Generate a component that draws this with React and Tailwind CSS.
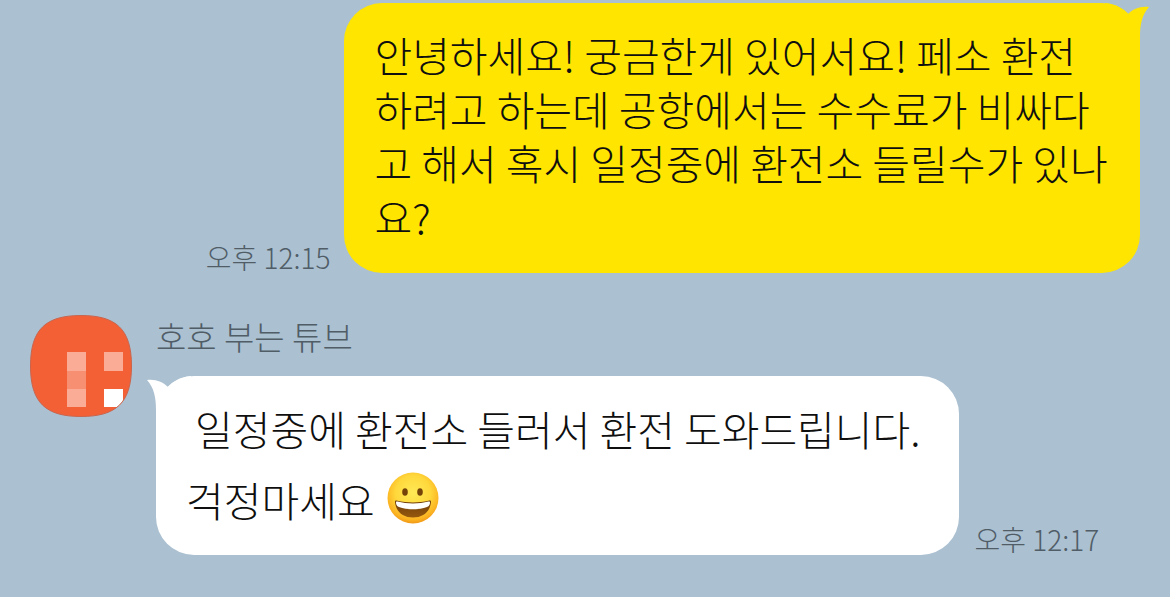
const ME = {
  text: '안녕하세요! 궁금한게 있어서요! 페소 환전하려고 하는데 공항에서는 수수료가 비싸다고 해서 혹시 일정중에 환전소 들릴수가 있나요?',
  time: '오후 12:15',
};

const GUIDE = {
  name: '호호 부는 튜브',
  lines: [' 일정중에 환전소 들러서 환전 도와드립니다.', '걱정마세요 '],
  time: '오후 12:17',
};

const AVATAR_SHAPE = 'M51 .5C86 .5 101.5 14 101.5 51S86 101.5 51 101.5.5 88 .5 51 16 .5 51 .5Z';

function Avatar() {
  return (
    <svg viewBox="0 0 102 102" className="w-[102px] h-[102px] shrink-0" role="img" aria-label={GUIDE.name}>
      <clipPath id="avatar-shape">
        <path d={AVATAR_SHAPE} />
      </clipPath>
      <g clipPath="url(#avatar-shape)">
        <rect width="102" height="102" fill="#f46036" />
        <rect x="37" y="37" width="19" height="19" fill="#faac96" />
        <rect x="37" y="56" width="19" height="18" fill="#f78f73" />
        <rect x="37" y="74" width="19" height="18" fill="#faac96" />
        <rect x="74" y="37" width="19" height="19" fill="#faac96" />
        <rect x="74" y="74" width="19" height="18" fill="#fff" />
      </g>
      <path d={AVATAR_SHAPE} fill="none" stroke="#c9644c" />
    </svg>
  );
}

function Grin() {
  return (
    <svg viewBox="0 0 52 52" className="w-[52px] h-[52px] ml-[3px] mb-1" role="img" aria-label="😀">
      <defs>
        <radialGradient id="grin-face" cx=".5" cy=".4" r=".62">
          <stop offset="0" stopColor="#ffe956" />
          <stop offset=".55" stopColor="#ffd83c" />
          <stop offset=".85" stopColor="#fbb321" />
          <stop offset="1" stopColor="#ee9115" />
        </radialGradient>
        <linearGradient id="grin-mouth" x1="0" y1="0" x2="0" y2="1">
          <stop offset="0" stopColor="#6d3b08" />
          <stop offset="1" stopColor="#96590f" />
        </linearGradient>
      </defs>
      <circle cx="26" cy="26" r="25.5" fill="url(#grin-face)" />
      <ellipse cx="18" cy="20" rx="2.8" ry="3.8" fill="#754309" />
      <ellipse cx="33" cy="20" rx="2.8" ry="3.8" fill="#754309" />
      <path d="M8 30C8 28.5 9 28.3 10.500 28.800 20 31 32 31 41.500 28.800 43 28.300 44 28.500 44 30 43 40 36 45.500 26 45.500S9 40 8 30Z" fill="url(#grin-mouth)" />
      <path d="M9 30C9 29.300 9.500 29.300 10.500 29.500 20 32 32 32 41.500 29.500 42.500 29.300 43 29.300 43 30 43 32.500 42.500 34 40 35 32 38 20 38 12 35 9.500 34 9 32.500 9 30Z" fill="#fff" />
    </svg>
  );
}

export default function App() {
  return (
    <main className="min-h-screen bg-[#abc0d1] pt-[3px] pb-10 font-['Noto_Sans_CJK_KR',sans-serif] font-light text-[#0f0f0f]">
      {/* Sent message */}
      <div className="flex items-end justify-end gap-3.5">
        <time className="text-[28px] leading-[32px] text-[#505d67] whitespace-nowrap">{ME.time}</time>
        <div className="relative w-[68%] mr-[30px] rounded-[38px] bg-[#ffe500] px-[30px] pt-6 pb-[30px]">
          <svg viewBox="0 0 44 40" className="absolute top-0 -right-[9px] w-[44px] h-[40px]" aria-hidden="true">
            <path d="M0 0C12 1 18 6 23 11 28 6 35 3 44 4 37 12 35 21 35 34V40H0Z" fill="#ffe500" />
          </svg>
          <p className="relative text-[41px] leading-[54px] break-all">{ME.text}</p>
        </div>
      </div>

      {/* Received message */}
      <div className="flex items-start gap-6 pl-[30px] mt-[42px]">
        <Avatar />
        <div>
          <h2 className="text-[33px] leading-[42px] font-light text-[#505d67]">{GUIDE.name}</h2>
          <div className="flex items-end gap-4 mt-[19px]">
            <div className="relative rounded-[38px] bg-white pl-[30px] pr-[38px] pt-4 pb-5">
              <svg viewBox="0 0 44 40" className="absolute top-0 -left-[9px] w-[44px] h-[40px]" aria-hidden="true">
                <path d="M44 0C32 1 26 6 21 11 16 6 9 3 0 4 7 12 9 21 9 34V40H44Z" fill="#fff" />
              </svg>
              <p className="relative text-[41px] leading-[72px] whitespace-pre">{GUIDE.lines[0]}</p>
              <p className="relative flex items-center text-[41px] leading-[71px] whitespace-pre">{GUIDE.lines[1]}<Grin /></p>
            </div>
            <time className="text-[28px] leading-[32px] text-[#505d67] whitespace-nowrap">{GUIDE.time}</time>
          </div>
        </div>
      </div>
    </main>
  );
}
